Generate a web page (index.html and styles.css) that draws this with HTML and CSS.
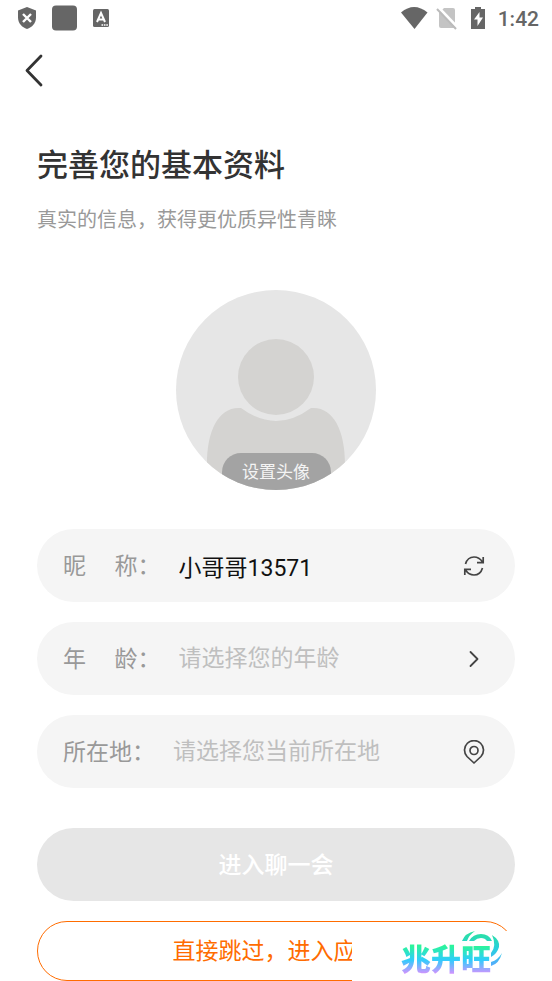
FILE: index.html
```html
<!DOCTYPE html>
<html lang="zh-CN">
<head>
<meta charset="utf-8">
<meta name="viewport" content="width=device-width, initial-scale=1">
<title>完善您的基本资料</title>
<link rel="stylesheet" href="styles.css">
</head>
<body>
<header class="status">
  <div class="status-left">
    <svg width="20" height="24" viewBox="0 0 20 24"><path fill="#666" d="M10 1 19 4.500V11.500C19 17 15 21.500 10 23 5 21.500 1 17 1 11.500V4.500Z"/><path stroke="#fff" stroke-width="2.400" d="m6 8 8 8m0-8-8 8"/></svg>
    <svg width="26" height="26" viewBox="0 0 26 26"><rect x="0" y=".5" width="25" height="25" rx="4" fill="#666"/></svg>
    <svg width="18" height="20" viewBox="0 0 18 20"><rect x="0" y="1" width="16" height="18" rx="1.500" fill="#666"/><path fill="none" stroke="#fff" stroke-width="2" d="m4 14 4-9 4 9M5.500 11.500h5"/><path stroke="#fff" stroke-width="1.400" stroke-dasharray="1.600 .8" d="M8.500 17h7"/></svg>
  </div>
  <div class="status-right">
    <svg class="wifi" width="24" height="24" viewBox="0 0 24 24"><path fill="#666" d="M1 6.500Q14-4.500 27.500 6.500L14.500 23Z"/></svg>
    <svg width="22" height="24" viewBox="0 0 22 24"><path fill="#c4c4c4" d="M8 2h9q2 0 2 2v16q0 2-2 2H5q-2 0-2-2V7Z"/><path stroke="#fff" stroke-width="3" d="m3 2 19 20"/><path stroke="#bbb" stroke-width="2" d="m1 3 19 20"/></svg>
    <svg width="16" height="24" viewBox="0 0 16 24"><path fill="#666" d="M5 1h6v2h4v20H1V3h4Z"/><path fill="#fff" d="M9.500 6 4 13.500h3.500V20L13 11.500H9.500Z"/></svg>
    <span class="clock">1:42</span>
  </div>
</header>
<nav class="nav">
  <button class="back" type="button" aria-label="返回">
    <svg width="20" height="34" viewBox="0 0 20 34"><path fill="none" stroke="#333" stroke-width="2.800" stroke-linecap="round" stroke-linejoin="round" d="M17 3 3 17.500 17 32"/></svg>
  </button>
</nav>
<main class="page">
  <h1 class="title">完善您的基本资料</h1>
  <p class="subtitle">真实的信息，获得更优质异性青睐</p>
  <button class="avatar" type="button">
    <svg class="person" viewBox="0 0 200 200"><circle cx="100" cy="87" r="38" fill="#d4d3d1"/><path fill="#d4d3d1" d="M65 118Q100 144 135 118C157 116 169 140 169 174V200H31V174C31 140 43 116 65 118Z"/></svg>
    <span class="avatar-tag">设置头像</span>
  </button>
  <form class="form">
    <div class="field">
      <label for="nick">昵&nbsp;&nbsp;&nbsp;&nbsp;&nbsp;称：</label>
      <input id="nick" type="text" value="小哥哥13571">
      <button class="icon" type="button" aria-label="换一个">
        <svg width="24" height="24" viewBox="0 0 24 24"><path fill="none" stroke="#444" stroke-width="1.700" d="M3.500 10C5 5 8 3 12 3c3.500 0 6.500 2 8.500 5M21.200 3v5.600H15M20.500 14C19 19 16 21 12 21c-3.500 0-6.500-2-8.500-5M2.800 21v-5.600H9"/></svg>
      </button>
    </div>
    <div class="field">
      <label for="age">年&nbsp;&nbsp;&nbsp;&nbsp;&nbsp;龄：</label>
      <input id="age" type="text" placeholder="请选择您的年龄" readonly>
      <button class="icon" type="button" aria-label="选择年龄">
        <svg width="24" height="24" viewBox="0 0 24 24"><path fill="none" stroke="#444" stroke-width="1.800" stroke-linecap="round" stroke-linejoin="round" d="m8.500 5 7 7-7 7"/></svg>
      </button>
    </div>
    <div class="field">
      <label for="place">所在地：</label>
      <input id="place" type="text" placeholder="请选择您当前所在地" readonly>
      <button class="icon" type="button" aria-label="选择所在地">
        <svg width="24" height="24" viewBox="0 0 24 24"><g fill="none" stroke="#444" stroke-width="1.700" stroke-linejoin="round"><path d="M12 23 5 16.500A9.500 9.500 0 1 1 19 16.500Z"/><circle cx="12" cy="10.500" r="4"/></g></svg>
      </button>
    </div>
    <button class="submit" type="submit">进入聊一会</button>
    <button class="skip" type="button">直接跳过，进入应用</button>
  </form>
</main>
<aside class="mark">
  <span class="mark-text">兆升旺</span>
  <svg class="mark-arcs" width="42" height="36" viewBox="0 0 42 36"><defs><linearGradient id="g" x1="0" y1="0" x2="0" y2="36" gradientUnits="userSpaceOnUse"><stop offset="0" stop-color="#2be39a"/><stop offset=".5" stop-color="#28cfe0"/><stop offset="1" stop-color="#5aa8ff"/></linearGradient></defs><path fill="url(#g)" d="M1 10Q4 2 14 0 8 4 6 10ZM8 10Q12 3 20 3T31 10H26Q24 7 20 7T13 10ZM31 4Q39 9 38 16 36 23 30 26V22Q36 15 31 4ZM41 22Q38 33 30 35V31Q37 29 41 22Z"/></svg>
</aside>
</body>
</html>
```
FILE: styles.css
```css
* {
  box-sizing: border-box;
}

body {
  margin: 0;
  background: #fff;
  color: #333;
  font-family: Roboto, "Noto Sans CJK SC", sans-serif;
}

svg {
  display: block;
}

button,
input {
  margin: 0;
  padding: 0;
  border: 0;
  background: none;
  color: inherit;
  font: inherit;
}

.status {
  display: flex;
  justify-content: space-between;
  height: 36px;
  padding: 0 13px 0 17px;
}

.status-left,
.status-right {
  display: flex;
  align-items: center;
}

.status-left {
  gap: 15px;
}

.status-right {
  gap: 12px;
}

.wifi {
  overflow: visible;
}

.clock {
  padding-top: 2px;
  color: #666;
  font-size: 21px;
  font-weight: 500;
  line-height: 24px;
}

.nav {
  padding: 17px 24px;
}

.back {
  display: block;
}

.page {
  padding: 39px 37px 0;
}

.title {
  margin: 0;
  font-size: 31px;
  font-weight: 500;
  line-height: 46px;
}

.subtitle {
  margin: 16px 0 0;
  color: #999;
  font-size: 20px;
  line-height: 30px;
}

.avatar {
  display: flex;
  align-items: flex-end;
  justify-content: center;
  position: relative;
  width: 200px;
  height: 200px;
  margin: 55px auto 39px;
  border-radius: 50%;
  background: #e6e6e6;
  overflow: hidden;
}

.person {
  position: absolute;
  inset: 0;
}

.avatar-tag {
  position: relative;
  width: 109px;
  height: 37px;
  border-radius: 19px 19px 0 0;
  background: #a3a3a3;
  color: #f4f4f4;
  font-size: 17px;
  line-height: 39px;
}

.form {
  display: flex;
  flex-direction: column;
  gap: 20px;
}

.field {
  display: flex;
  align-items: center;
  height: 73px;
  padding: 0 29px 0 26px;
  border-radius: 37px;
  background: #f5f5f5;
  font-size: 23px;
  line-height: 32px;
}

.field label {
  padding-top: 2px;
  color: #999;
  white-space: nowrap;
}

.field input {
  flex: 1;
  min-width: 0;
  height: 34px;
  margin-left: 18px;
  outline: 0;
  color: #111;
}

.field input::placeholder {
  color: #bfbfbf;
}

.submit,
.skip {
  padding-top: 2px;
  font-size: 23px;
  line-height: 32px;
}

.submit {
  height: 73px;
  margin-top: 20px;
  border-radius: 37px;
  background: #e6e6e6;
  color: #fff;
  font-weight: 500;
}

.skip {
  height: 60px;
  border: 1px solid #ff6c00;
  border-radius: 30px;
  color: #ff6c00;
}

.mark {
  position: absolute;
  right: 0;
  top: 931px;
  width: 200px;
  height: 50px;
  padding-left: 49px;
  background: #fff;
}

.mark-text {
  display: block;
  height: 50px;
  background: linear-gradient(#2bf59a 30%, #2fcdfc 58%, #e28cff 88%);
  background-clip: text;
  color: transparent;
  font-size: 30px;
  font-weight: 900;
  line-height: 58px;
}

.mark-arcs {
  position: absolute;
  left: 109px;
  top: 0;
}
```
